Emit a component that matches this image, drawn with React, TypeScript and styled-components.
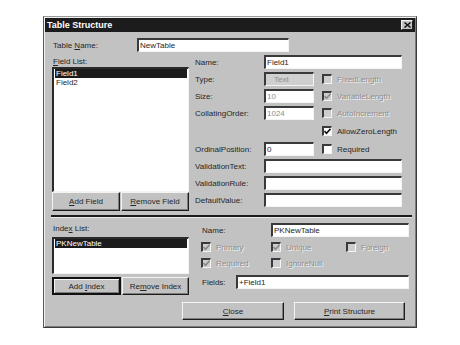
import React from "react";
import styled, { createGlobalStyle, css } from "styled-components";

const Global = createGlobalStyle`
  html, body { margin: 0; padding: 0; background: #ffffff; }
  body { font-family: "Liberation Sans", Arial, sans-serif; font-size: 8px; color: #262626; }
  #root { width: 460px; height: 345px; }
`;

const FACE = "#c2c2c2";
const DARK = "#1c1c1c";

const Page = styled.div`
  width: 460px;
  height: 345px;
  box-sizing: border-box;
  padding: 16px 0 0 43px;
`;

const Window = styled.div`
  width: 374px;
  height: 312px;
  box-sizing: border-box;
  background: ${FACE};
  border: 1px solid #3a3a3a;
  border-top-color: #9a9a9a;
  border-left-color: #5a5a5a;
  box-shadow: inset 1px 1px 0 #efefef, inset -1px -1px 0 #7c7c7c;
  padding: 1px;
  display: flex;
  flex-direction: column;
`;

const TitleBar = styled.div`
  height: 14px;
  background: ${DARK};
  color: #fff;
  font-weight: bold;
  font-size: 9px;
  display: flex;
  align-items: center;
  justify-content: space-between;
  padding: 0 2px 0 2px;
`;

const CloseBtn = styled.div`
  width: 12px;
  height: 10px;
  box-sizing: border-box;
  background: ${FACE};
  border: 1px solid;
  border-color: #f4f4f4 #202020 #202020 #f4f4f4;
  display: flex;
  align-items: center;
  justify-content: center;
`;

const Content = styled.div`
  flex: 1;
  display: flex;
  flex-direction: column;
  padding: 6px 5px 0 7px;
`;

const Row = styled.div<{ $mt?: number }>`
  display: flex;
  align-items: center;
  height: 14px;
  margin-top: ${(p) => p.$mt ?? 0}px;
`;

const Label = styled.div<{ $w?: number; $disabled?: boolean }>`
  width: ${(p) => (p.$w ? `${p.$w}px` : "auto")};
  flex: none;
  white-space: nowrap;
  padding-left: 1px;
  box-sizing: border-box;
  ${(p) =>
    p.$disabled &&
    css`
      color: #8e8e8e;
      text-shadow: 1px 1px 0 #f2f2f2;
    `}
`;

const Field = styled.div<{ $w?: number; $span?: boolean; $gray?: boolean; $dimText?: boolean }>`
  width: ${(p) => (p.$w ? `${p.$w}px` : "auto")};
  ${(p) => !p.$w && css`flex: 1;`}
  ${(p) => p.$span && css`grid-column: 2 / 4;`}
  height: 14px;
  box-sizing: border-box;
  border-style: solid;
  border-width: 2px 1px 1px 2px;
  border-color: #3a3a3a #f4f4f4 #f4f4f4 #3a3a3a;
  background: ${(p) => (p.$gray ? "#cfcfcf" : "#ffffff")};
  color: ${(p) => (p.$dimText ? "#8e8e8e" : "#262626")};
  padding-left: ${(p) => (p.$gray ? "8px" : "1px")};
  line-height: 11px;
  white-space: nowrap;
  overflow: hidden;
`;

const TopSection = styled.div`
  display: flex;
  gap: 5px;
  margin-top: 3px;
`;

const LeftCol = styled.div`
  width: 137px;
  flex: none;
  display: flex;
  flex-direction: column;
`;

const ColLabel = styled.div<{ $h: number; $pb?: number }>`
  height: ${(p) => p.$h}px;
  box-sizing: border-box;
  display: flex;
  align-items: center;
  padding-left: 1px;
  padding-bottom: ${(p) => p.$pb ?? 0}px;
`;

const ListBox = styled.div<{ $h: number }>`
  height: ${(p) => p.$h}px;
  box-sizing: border-box;
  background: #fff;
  border-style: solid;
  border-width: 2px 1px 1px 2px;
  border-color: #2a2a2a #f4f4f4 #f4f4f4 #2a2a2a;
  padding: 0 1px;
`;

const ListItem = styled.div<{ $sel?: boolean }>`
  height: 9px;
  line-height: 9px;
  padding-left: 1px;
  background: ${(p) => (p.$sel ? DARK : "transparent")};
  color: ${(p) => (p.$sel ? "#fff" : "#262626")};
`;

const ButtonRow = styled.div<{ $mt?: number }>`
  display: flex;
  gap: 1px;
  margin-top: ${(p) => p.$mt ?? 0}px;
`;

const Button = styled.div<{ $w?: number; $h: number; $default?: boolean }>`
  width: ${(p) => (p.$w ? `${p.$w}px` : "auto")};
  ${(p) => !p.$w && css`flex: 1;`}
  height: ${(p) => p.$h}px;
  box-sizing: border-box;
  background: ${FACE};
  border: 1px solid;
  border-color: #f4f4f4 #1c1c1c #1c1c1c #f4f4f4;
  box-shadow: inset -1px -1px 0 #7c7c7c;
  display: flex;
  align-items: center;
  justify-content: center;
  white-space: nowrap;
  ${(p) =>
    p.$default &&
    css`
      border-width: 2px;
      border-color: #111 #111 #111 #111;
      box-shadow: inset 1px 1px 0 #f4f4f4, inset -1px -1px 0 #7c7c7c;
    `}
`;

const FieldGrid = styled.div`
  width: 208px;
  display: grid;
  grid-template-columns: 70px 50px 88px;
  grid-template-rows: 14px 14px 14px 14px 16px 14px 14px 14px 14px;
  row-gap: 3px;
  align-items: center;
`;

const CheckItem = styled.div<{ $col?: number; $pl?: number }>`
  display: flex;
  align-items: center;
  gap: 4px;
  white-space: nowrap;
  padding-left: ${(p) => p.$pl ?? 0}px;
  ${(p) => p.$col && css`grid-column: ${p.$col};`}
`;

const Box = styled.div<{ $disabled?: boolean }>`
  width: 10px;
  height: 10px;
  flex: none;
  box-sizing: border-box;
  border-style: solid;
  border-width: 2px 1px 1px 2px;
  border-color: #3a3a3a #f4f4f4 #f4f4f4 #3a3a3a;
  background: ${(p) => (p.$disabled ? "#cdcdcd" : "#fff")};
  display: flex;
  align-items: center;
  justify-content: center;
`;

const Divider = styled.div`
  height: 2px;
  background: #1a1a1a;
  margin: 4px -2px 0 -1px;
  border-bottom: 1px solid #e8e8e8;
`;

const BottomSection = styled.div`
  display: flex;
  gap: 12px;
  margin-top: 5px;
`;

const RightCol = styled.div`
  width: 208px;
  display: flex;
  flex-direction: column;
`;

const CheckRow = styled.div<{ $mt: number }>`
  display: grid;
  grid-template-columns: 70px 75px auto;
  height: 10px;
  margin-top: ${(p) => p.$mt}px;
`;

const FooterRow = styled.div`
  display: flex;
  justify-content: flex-end;
  gap: 10px;
  margin-top: 7px;
  padding-right: 5px;
`;

const Check: React.FC<{ checked?: boolean; disabled?: boolean; label: string; col?: number; pl?: number }> = ({
  checked,
  disabled,
  label,
  col,
  pl,
}) => (
  <CheckItem $col={col} $pl={pl}>
    <Box $disabled={disabled}>
      {checked && (
        <svg width="7" height="7" viewBox="0 0 7 7">
          <path d="M0.5 3 L2.5 5.2 L6.5 0.8" fill="none" stroke={disabled ? "#8a8a8a" : "#111"} strokeWidth="1.6" />
        </svg>
      )}
    </Box>
    <Label $disabled={disabled}>{label}</Label>
  </CheckItem>
);

export default function App() {
  return (
    <>
      <Global />
      <Page>
        <Window>
          <TitleBar>
            <span>Table Structure</span>
            <CloseBtn>
              <svg width="7" height="6" viewBox="0 0 7 6">
                <path d="M0.5 0.5 L6.5 5.5 M6.5 0.5 L0.5 5.5" stroke="#111" strokeWidth="1.5" />
              </svg>
            </CloseBtn>
          </TitleBar>
          <Content>
            <Row>
              <Label $w={85}>
                Table <u>N</u>ame:
              </Label>
              <Field $w={152}>NewTable</Field>
            </Row>
            <TopSection>
              <LeftCol>
                <ColLabel $h={12}>
                  <span>
                    <u>F</u>ield List:
                  </span>
                </ColLabel>
                <ListBox $h={125}>
                  <ListItem $sel>Field1</ListItem>
                  <ListItem>Field2</ListItem>
                </ListBox>
                <ButtonRow>
                  <Button $h={19}>
                    <span>
                      <u>A</u>dd Field
                    </span>
                  </Button>
                  <Button $h={19}>
                    <span>
                      <u>R</u>emove Field
                    </span>
                  </Button>
                </ButtonRow>
              </LeftCol>
              <FieldGrid>
                <Label>Name:</Label>
                <Field $span>Field1</Field>

                <Label>Type:</Label>
                <Field $gray $dimText>
                  Text
                </Field>
                <Check disabled label="FixedLength" pl={8} />

                <Label>Size:</Label>
                <Field $dimText>10</Field>
                <Check disabled checked label="VariableLength" pl={8} />

                <Label>CollatingOrder:</Label>
                <Field $dimText>1024</Field>
                <Check disabled label="AutoIncrement" pl={8} />

                <Check checked label="AllowZeroLength" col={3} pl={8} />

                <Label>OrdinalPosition:</Label>
                <Field>0</Field>
                <Check label="Required" pl={8} />

                <Label>ValidationText:</Label>
                <Field $span />
                <Label>ValidationRule:</Label>
                <Field $span />
                <Label>DefaultValue:</Label>
                <Field $span />
              </FieldGrid>
            </TopSection>
            <Divider />
            <BottomSection>
              <LeftCol>
                <ColLabel $h={14} $pb={4}>
                  <span>
                    Inde<u>x</u> List:
                  </span>
                </ColLabel>
                <ListBox $h={37}>
                  <ListItem $sel>PKNewTable</ListItem>
                </ListBox>
                <ButtonRow $mt={3}>
                  <Button $h={18} $default>
                    <span>
                      Add <u>I</u>ndex
                    </span>
                  </Button>
                  <Button $h={18}>
                    <span>
                      Re<u>m</u>ove Index
                    </span>
                  </Button>
                </ButtonRow>
              </LeftCol>
              <RightCol>
                <Row>
                  <Label $w={70}>Name:</Label>
                  <Field>PKNewTable</Field>
                </Row>
                <CheckRow $mt={5}>
                  <Check disabled checked label="Primary" />
                  <Check disabled checked label="Unique" />
                  <Check disabled label="Foreign" />
                </CheckRow>
                <CheckRow $mt={6}>
                  <Check disabled checked label="Required" />
                  <Check disabled label="IgnoreNull" />
                </CheckRow>
                <Row $mt={7}>
                  <Label $w={35}>Fields:</Label>
                  <Field>+Field1</Field>
                </Row>
              </RightCol>
            </BottomSection>
            <FooterRow>
              <Button $w={102} $h={18}>
                <span>
                  <u>C</u>lose
                </span>
              </Button>
              <Button $w={111} $h={18}>
                <span>
                  <u>P</u>rint Structure
                </span>
              </Button>
            </FooterRow>
          </Content>
        </Window>
      </Page>
    </>
  );
}
